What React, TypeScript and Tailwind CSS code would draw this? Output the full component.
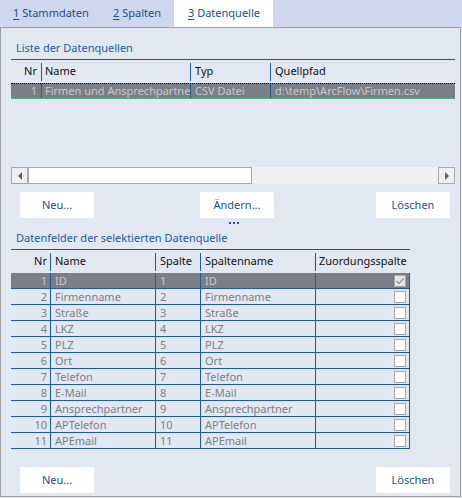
import React from "react";

const FONT = { fontFamily: '"Noto Sans", "Open Sans", sans-serif' };

const FIELDS = [
  "ID",
  "Firmenname",
  "Straße",
  "LKZ",
  "PLZ",
  "Ort",
  "Telefon",
  "E-Mail",
  "Ansprechpartner",
  "APTelefon",
  "APEmail",
];

function Tab({ n, label, active, w, pl }: { n: string; label: string; active?: boolean; w: string; pl: string }) {
  return (
    <div
      className={`flex h-[27px] items-center text-[11px] text-[#1c4f8c] ${w} ${pl} ${
        active ? "bg-white" : ""
      }`}
    >
      <span className="underline underline-offset-2">{n}</span>
      <span>&nbsp;{label}</span>
    </div>
  );
}

function Btn({ children }: { children: React.ReactNode }) {
  return (
    <div className="flex h-[26px] w-[74px] items-center justify-center bg-white text-[11px] text-[#1c4f8c]">
      {children}
    </div>
  );
}

function Check({ checked }: { checked?: boolean }) {
  return (
    <div
      className={`flex h-[12px] w-[12px] items-center justify-center border border-[#a6a6a6] ${
        checked ? "bg-[#e6e6e6]" : "bg-white"
      }`}
    >
      {checked && (
        <svg width="10" height="10" viewBox="0 0 10 10">
          <path d="M1.5 5.2 L4 7.5 L8.6 2.3" fill="none" stroke="#8a8a8a" strokeWidth="1.2" />
        </svg>
      )}
    </div>
  );
}

export default function App() {
  return (
    <div className="h-[498px] w-[462px] overflow-hidden bg-[#e2e8f2]" style={FONT}>
      <div className="flex h-[27px] bg-[#cdd7ee]">
        <Tab n="1" label="Stammdaten" w="w-[98px]" pl="pl-[13px]" />
        <Tab n="2" label="Spalten" w="w-[76px]" pl="pl-[15px]" />
        <Tab n="3" label="Datenquelle" active w="w-[99px]" pl="pl-[14px]" />
      </div>

      <div className="flex h-[470px] w-[461px] flex-col border border-[#a0a0a0] bg-[#e2e8f2]">
        <div className="ml-[15px] mt-[12px] h-[16px] text-[11px] leading-[16px] text-[#1f5b9c]">
          Liste der Datenquellen
        </div>

        <div className="ml-[10px] mt-[3px] w-[444px] border-t border-[#1e5c99]">
          <div className="flex h-[23px] items-center text-[11px] text-[#111]">
            <div className="w-[30px] pr-[4px] text-right">Nr</div>
            <div className="h-[18px] w-px bg-[#1e5c99]" />
            <div className="w-[148px] pl-[3px]">Name</div>
            <div className="h-[18px] w-px bg-[#1e5c99]" />
            <div className="w-[79px] pl-[4px]">Typ</div>
            <div className="h-[18px] w-px bg-[#1e5c99]" />
            <div className="flex-1 pl-[4px]">Quellpfad</div>
          </div>
          <div className="flex h-[16px] items-center border-y border-dotted border-t-black border-b-[#57c08c] bg-[#7a7f87] text-[11px] leading-[14px] text-[#c4c8cd]">
            <div className="w-[30px] pr-[4px] text-right">1</div>
            <div className="h-full w-px bg-[#1e5c99]" />
            <div className="w-[148px] overflow-hidden whitespace-nowrap pl-[3px]">Firmen und Ansprechpartne</div>
            <div className="h-full w-px bg-[#1e5c99]" />
            <div className="w-[79px] overflow-hidden whitespace-nowrap pl-[4px]">CSV Datei</div>
            <div className="h-full w-px bg-[#1e5c99]" />
            <div className="flex-1 whitespace-nowrap pl-[4px]">d:\temp\ArcFlow\Firmen.csv</div>
          </div>
          <div className="h-[68px]" />
          <div className="flex h-[17px] bg-[#f0f0f0]">
            <div className="flex w-[17px] items-center justify-center border border-[#a9a9a9] bg-[#f0f0f0]">
              <div className="h-0 w-0 border-y-[4px] border-r-[4px] border-y-transparent border-r-[#606060]" />
            </div>
            <div className="w-[224px] border border-[#a9a9a9] bg-white" />
            <div className="flex-1" />
            <div className="flex w-[17px] items-center justify-center border border-[#a9a9a9] bg-[#f0f0f0]">
              <div className="h-0 w-0 border-y-[4px] border-l-[4px] border-y-transparent border-l-[#606060]" />
            </div>
          </div>
        </div>

        <div className="ml-[19px] mt-[8px] flex w-[430px]">
          <Btn>Neu...</Btn>
          <div className="ml-[106px]">
            <Btn>Ändern...</Btn>
          </div>
          <div className="ml-auto">
            <Btn>Löschen</Btn>
          </div>
        </div>

        <div className="ml-[228px] flex h-[10px] items-center gap-[2px]">
          {[0, 1, 2].map((i) => (
            <div key={i} className="h-[2px] w-[2px] bg-[#2d4f80]" />
          ))}
        </div>

        <div className="ml-[15px] mt-[2px] h-[16px] text-[11px] leading-[16px] text-[#1f5b9c]">
          Datenfelder der selektierten Datenquelle
        </div>

        <div className="ml-[10px] mt-[3px] w-[399px] border-t border-[#1e5c99] text-[11px]">
          <div className="flex h-[23px] items-center text-[#111]">
            <div className="w-[39px] pr-[3px] text-right">Nr</div>
            <div className="h-[18px] w-px bg-[#1e5c99]" />
            <div className="w-[104px] pl-[4px]">Name</div>
            <div className="h-[18px] w-px bg-[#1e5c99]" />
            <div className="w-[44px] pl-[4px]">Spalte</div>
            <div className="h-[18px] w-px bg-[#1e5c99]" />
            <div className="w-[114px] pl-[4px]">Spaltenname</div>
            <div className="h-[18px] w-px bg-[#1e5c99]" />
            <div className="flex-1 whitespace-nowrap pl-[3px]">Zuordungsspalte</div>
          </div>
          {FIELDS.map((f, i) => {
            const sel = i === 0;
            return (
              <div
                key={f}
                className={`flex h-[16px] items-center border-b border-[#1e5c99] leading-[15px] ${
                  sel ? "bg-[#7a7f87] text-[#c4c8cd]" : "text-[#808080]"
                }`}
              >
                <div className="w-[39px] pr-[3px] text-right">{i + 1}</div>
                <div className="h-full w-px bg-[#1e5c99]" />
                <div className="w-[104px] whitespace-nowrap pl-[4px]">{f}</div>
                <div className="h-full w-px bg-[#1e5c99]" />
                <div className="w-[44px] pl-[4px]">{i + 1}</div>
                <div className="h-full w-px bg-[#1e5c99]" />
                <div className="w-[114px] whitespace-nowrap pl-[4px]">{f}</div>
                <div className="h-full w-px bg-[#1e5c99]" />
                <div className="flex flex-1 justify-end pr-[3px]">
                  <Check checked={sel} />
                </div>
                <div className="h-full w-px bg-[#1e5c99]" />
              </div>
            );
          })}
        </div>

        <div className="ml-[19px] mt-[18px] flex w-[430px]">
          <Btn>Neu...</Btn>
          <div className="ml-auto">
            <Btn>Löschen</Btn>
          </div>
        </div>
      </div>
    </div>
  );
}
